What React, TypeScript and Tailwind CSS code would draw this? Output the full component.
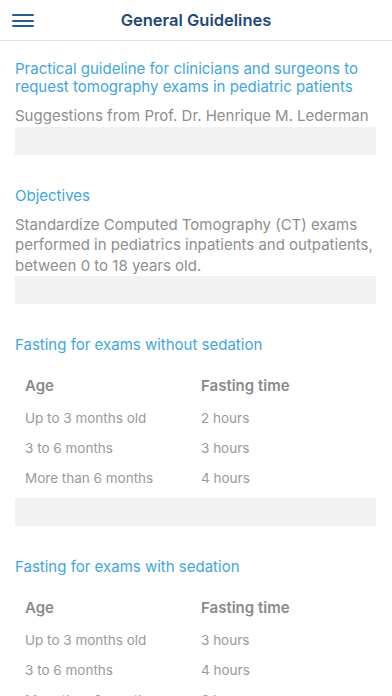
import React from 'react';

type Row = { age: string; time: string };

const withoutSedation: Row[] = [
  { age: 'Up to 3 months old', time: '2 hours' },
  { age: '3 to 6 months', time: '3 hours' },
  { age: 'More than 6 months', time: '4 hours' },
];

const withSedation: Row[] = [
  { age: 'Up to 3 months old', time: '3 hours' },
  { age: '3 to 6 months', time: '4 hours' },
  { age: 'More than 6 months', time: '6 hours' },
];

function SectionTitle({ children }: { children: React.ReactNode }) {
  return <h2 className="text-[15px] leading-[18px] text-[#3fa6de]">{children}</h2>;
}

function Divider() {
  return <div className="h-[28px] bg-[#f2f2f2]" />;
}

function FastingTable({ rows }: { rows: Row[] }) {
  return (
    <div className="pl-[10px] pt-[15px] pb-[5px]">
      <div className="grid h-[34px] grid-cols-[176px_1fr] items-center text-[15px] font-semibold text-[#8a8a8a]">
        <span>Age</span>
        <span>Fasting time</span>
      </div>
      {rows.map((r) => (
        <div key={r.age} className="grid h-[30px] grid-cols-[176px_1fr] items-center text-[13.5px] text-[#9a9a9a]">
          <span>{r.age}</span>
          <span>{r.time}</span>
        </div>
      ))}
    </div>
  );
}

export default function App() {
  return (
    <div className="h-[696px] overflow-hidden bg-white font-['Inter','Liberation_Sans',sans-serif]">
      <header className="relative flex h-[41px] items-center justify-center border-b border-[#e3e3e3]">
        <button className="absolute left-[12px] top-[14px] flex w-[22px] flex-col gap-[3.5px]">
          <span className="h-[2px] w-full rounded bg-[#2c5a8c]" />
          <span className="h-[2px] w-full rounded bg-[#2c5a8c]" />
          <span className="h-[2px] w-full rounded bg-[#2c5a8c]" />
        </button>
        <h1 className="text-[16.5px] font-semibold text-[#1e4a78]">General Guidelines</h1>
      </header>

      <main className="flex flex-col pl-[15px] pr-[16px] pt-[19px]">
        <section>
          <SectionTitle>
            Practical guideline for clinicians and surgeons to request tomography exams in pediatric patients
          </SectionTitle>
          <p className="mt-[10px] text-[15px] leading-[20.5px] text-[#8e8e8e]">
            Suggestions from Prof. Dr. Henrique M. Lederman
          </p>
          <Divider />
        </section>

        <section className="mt-[32px]">
          <SectionTitle>Objectives</SectionTitle>
          <p className="mt-[10px] text-[15px] leading-[20.5px] text-[#8e8e8e]">
            Standardize Computed Tomography (CT) exams performed in pediatrics inpatients and outpatients, between 0 to
            18 years old.
          </p>
          <Divider />
        </section>

        <section className="mt-[32px]">
          <SectionTitle>Fasting for exams without sedation</SectionTitle>
          <FastingTable rows={withoutSedation} />
          <Divider />
        </section>

        <section className="mt-[32px]">
          <SectionTitle>Fasting for exams with sedation</SectionTitle>
          <FastingTable rows={withSedation} />
          <Divider />
        </section>
      </main>
    </div>
  );
}
